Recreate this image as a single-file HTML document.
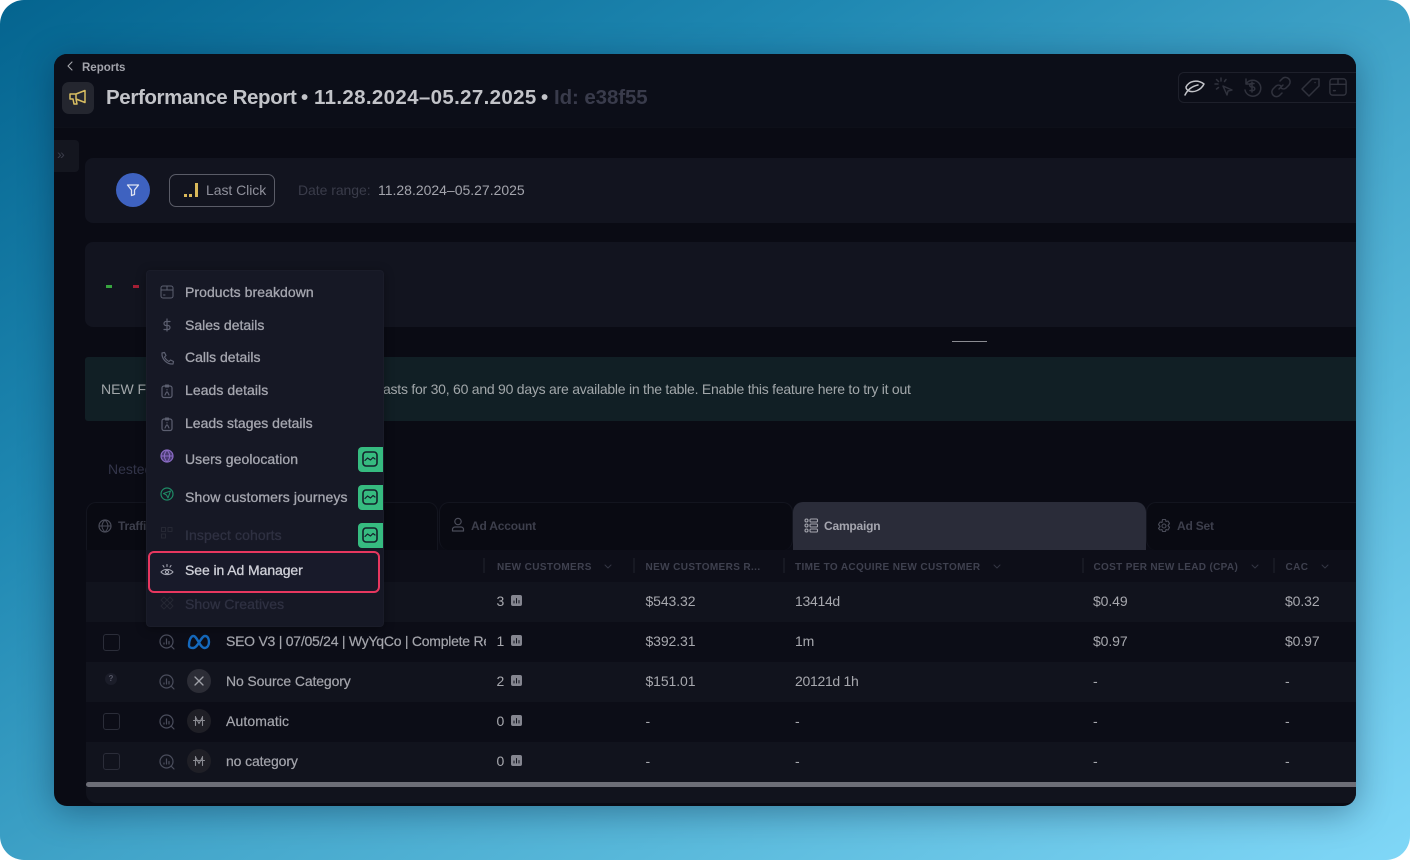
<!DOCTYPE html>
<html><head><meta charset="utf-8"><style>
*{box-sizing:border-box;margin:0;padding:0}
html,body{width:1410px;height:860px;overflow:hidden;background:#fff}
body{font-family:"Liberation Sans",sans-serif;position:relative}
#bg{position:absolute;inset:0;border-radius:24px;background:linear-gradient(148deg,#04648f 0%,#1f88b2 30%,#40a3c8 52%,#58b8da 72%,#80d7f7 100%);overflow:hidden}
#win{position:absolute;left:54px;top:54px;width:1302px;height:752px;border-radius:13px;background:#0a0b14;overflow:hidden;box-shadow:0 6px 34px rgba(0,20,50,.38)}
#in{position:absolute;inset:0;filter:blur(.3px)}
.a{position:absolute;white-space:nowrap}
svg{position:absolute;overflow:visible;fill:none;stroke-linecap:round;stroke-linejoin:round}
.card{position:absolute;background:#12141f;border-radius:8px}
.m{position:absolute;left:38px;font-size:14px;color:#a5a6af;white-space:nowrap;-webkit-text-stroke:.3px;letter-spacing:.06px}
.g{position:absolute;left:211px;width:25px;height:25px;background:#36bb80;border-radius:4px 0 0 4px}
.th{position:absolute;top:508px;font-size:10px;font-weight:bold;color:#3f414f;white-space:nowrap;letter-spacing:.38px}
.td{position:absolute;font-size:14px;color:#a7a8ae;white-space:nowrap;letter-spacing:-.1px}
.sep{position:absolute;top:504px;width:2px;height:15px;background:#171923}
.cb{position:absolute;left:49px;width:17px;height:17px;border:1px solid #2b2d39;border-radius:3px}
.tt{position:absolute;top:32px;font-size:20.5px;font-weight:bold;white-space:nowrap;color:#c2c3c8}
.tab{position:absolute;font-size:12px;font-weight:bold;color:#3d3f4c;white-space:nowrap;letter-spacing:-.2px;top:465px}
.lb{left:172px;color:#a4a5ac;-webkit-text-stroke:.2px}
</style></head><body>
<div id="bg">
<div id="win"><div id="in">
  <div class="a" style="left:0;top:0;width:1302px;height:74px;background:#0c0e18;border-bottom:1px solid #0e1019"></div>
  <svg style="left:12px;top:7px" width="8" height="10" viewBox="0 0 8 10"><path d="M6 1L2 5l4 4" stroke="#a7a8ae" stroke-width="1.100"/></svg>
  <div class="a" style="left:28px;top:8px;font-size:11.500px;font-weight:bold;color:#a2a3ab">Reports</div>
  <div class="a" style="left:8px;top:28px;width:32px;height:32px;background:#24262f;border-radius:7px"></div>
  <svg style="left:14px;top:33px" width="20" height="20" viewBox="0 0 20 20"><path d="M2 7v5h3l1 5h3l-1-5 9 3.500V3.500L8 7zM8 7v5" stroke="#d8bd62" stroke-width="1.500"/></svg>
  <div class="tt" style="left:52px;letter-spacing:-.37px">Performance Report</div>
  <div class="tt" style="left:247px">•</div>
  <div class="tt" style="left:260px;letter-spacing:.34px">11.28.2024–05.27.2025</div>
  <div class="tt" style="left:487px">•</div>
  <div class="tt" style="left:500px;color:#393b4b;letter-spacing:-.1px">Id: e38f55</div>

  <div class="a" style="left:1124px;top:18px;width:190px;height:31px;border:1px solid #1e202b;border-radius:6px"></div>
  <svg style="left:1129px;top:22px" width="22" height="22" viewBox="0 0 22 22"><path d="M2 19c3-6 8-9 13-10M3 11C6 5 14 3 21 8c-3 6-10 9-15 7-2-1-3-2-3-4z" stroke="#c3c4c9" stroke-width="1.500"/></svg>
  <svg style="left:1159px;top:22px" width="22" height="22" viewBox="0 0 22 22"><path d="M10 10l9 4-4 1-1 4zM8 2v3M2 8h3M3.500 3.500l2 2M13 3.500l-1.500 2M3.500 13l2-1.500" stroke="#30323d" stroke-width="1.500"/></svg>
  <svg style="left:1187px;top:22px" width="22" height="22" viewBox="0 0 22 22"><path d="M5 3v5h5M5 8a8 8 0 1 1-1 6M13 7.500h-2.500a1.600 1.600 0 0 0 0 3.500h1.500a1.600 1.600 0 0 1 0 3.500H9M11 6v10" stroke="#30323d" stroke-width="1.500"/></svg>
  <svg style="left:1216px;top:22px" width="22" height="22" viewBox="0 0 22 22"><path d="M9 13l4-4M10 5l2-2a4.500 4.500 0 0 1 7 6l-3 3a4 4 0 0 1-5 0M12 17l-2 2a4.500 4.500 0 0 1-7-6l3-3a4 4 0 0 1 5 0" stroke="#30323d" stroke-width="1.500"/></svg>
  <svg style="left:1245px;top:22px" width="22" height="22" viewBox="0 0 22 22"><path d="M3 13L13 3h7v7L10 20zM16 6.500h.1" stroke="#30323d" stroke-width="1.500"/></svg>
  <svg style="left:1275px;top:24px" width="18" height="18" viewBox="0 0 20 20"><rect x="1" y="1" width="18" height="18" rx="3" stroke="#30323d" stroke-width="1.600"/><path d="M1 7h18M10 1v6M5 14h2" stroke="#30323d" stroke-width="1.600"/></svg>

  <div class="a" style="left:0;top:86px;width:25px;height:32px;background:#14161f;border-radius:0 4px 4px 0"></div>
  <div class="a" style="left:3px;top:92px;font-size:14px;color:#3b3d4a">»</div>

  <div class="card" style="left:31px;top:104px;width:1280px;height:65px"></div>
  <div class="a" style="left:62px;top:119px;width:34px;height:34px;border-radius:50%;background:#3e62c0"></div>
  <svg style="left:72px;top:129px" width="14" height="14" viewBox="0 0 14 14"><path d="M1.500 2h11L8.500 7v4.500l-3 1V7z" stroke="#dfe4f2" stroke-width="1.300"/></svg>
  <div class="a" style="left:115px;top:120px;width:106px;height:33px;border:1px solid #5a5c67;border-radius:7px"></div>
  <div class="a" style="left:130px;top:140px;width:3px;height:3px;background:#d9b95a"></div>
  <div class="a" style="left:135px;top:140px;width:3px;height:3px;background:#d9b95a"></div>
  <div class="a" style="left:141px;top:129px;width:2.500px;height:14px;background:#d9b95a"></div>
  <div class="a" style="left:152px;top:128px;font-size:14px;color:#8f909b;letter-spacing:-.05px">Last Click</div>
  <div class="a" style="left:244px;top:128px;font-size:14px;color:#3a3c4a;letter-spacing:-.05px">Date range:</div>
  <div class="a" style="left:324px;top:128px;font-size:14px;color:#a3a4ac;letter-spacing:-.01px">11.28.2024–05.27.2025</div>

  <div class="card" style="left:31px;top:188px;width:1280px;height:85px"></div>
  <div class="a" style="left:52px;top:231px;width:6px;height:3px;background:#38a53f"></div>
  <div class="a" style="left:79px;top:231px;width:6px;height:3px;background:#a51f35"></div>
  <div class="a" style="left:898px;top:287px;width:35px;height:1px;background:#8b8c92"></div>

  <div class="a" style="left:31px;top:303px;width:1280px;height:64px;background:#111f25;border-radius:3px"></div>
  <div class="a" style="left:47px;top:327px;font-size:14px;color:#a2a7aa">NEW F</div>
  <div class="a" style="left:329px;top:327px;font-size:14px;color:#a2a7aa;letter-spacing:-.24px">asts for 30, 60 and 90 days are available in the table. Enable this feature here to try it out</div>

  <div class="a" style="left:54px;top:407px;font-size:14px;color:#33354a">Nested</div>

  <div class="a" style="left:32px;top:448px;width:352px;height:48px;background:#090a12;border:1px solid #13151f;border-bottom:0;border-radius:10px 10px 0 0"></div>
  <svg style="left:44px;top:465px" width="14" height="14" viewBox="0 0 14 14"><circle cx="7" cy="7" r="6" stroke="#4a4c59" stroke-width="1.200"/><path d="M1 7h12M7 1c-4 4-4 8 0 12M7 1c4 4 4 8 0 12" stroke="#4a4c59" stroke-width="1"/></svg>
  <div class="tab" style="left:64px">Traffic</div>
  <div class="a" style="left:385px;top:448px;width:354px;height:48px;background:#090a12;border:1px solid #13151f;border-bottom:0;border-radius:10px"></div>
  <svg style="left:397px;top:463px" width="14" height="15" viewBox="0 0 14 15"><circle cx="7" cy="4.500" r="3.200" stroke="#4a4c59" stroke-width="1.200"/><path d="M1.500 14v-1.500A2.500 2.500 0 0 1 4 10h6a2.500 2.500 0 0 1 2.500 2.500V14z" stroke="#4a4c59" stroke-width="1.200"/></svg>
  <div class="tab" style="left:417px">Ad Account</div>
  <div class="a" style="left:739px;top:448px;width:353px;height:48px;background:#2a2c39;border-radius:10px 10px 0 0"></div>
  <svg style="left:750px;top:464px" width="14" height="15" viewBox="0 0 14 15"><g stroke="#a5a6af" stroke-width="1.100"><circle cx="2.500" cy="2.500" r="1.500"/><circle cx="2.500" cy="7.500" r="1.500"/><circle cx="2.500" cy="12.500" r="1.500"/><rect x="6" y="1" width="7.500" height="3" rx="1"/><rect x="6" y="6" width="7.500" height="3" rx="1"/><rect x="6" y="11" width="7.500" height="3" rx="1"/></g></svg>
  <div class="tab" style="left:770px;color:#a5a6af">Campaign</div>
  <div class="a" style="left:1092px;top:448px;width:230px;height:48px;background:#090a12;border:1px solid #13151f;border-bottom:0;border-radius:10px"></div>
  <svg style="left:1103px;top:465px" width="14" height="14" viewBox="0 0 14 14"><path d="M5.500 1h3l.5 2 2-.5 1.500 2.500-1.500 2 1.500 2-1.500 2.500-2-.5-.5 2h-3l-.5-2-2 .5L1.500 10 3 8 1.500 6 3 3.500l2 .5z" stroke="#4a4c59" stroke-width="1.100" transform="translate(0 -.5)"/><circle cx="7" cy="7" r="2" stroke="#4a4c59" stroke-width="1.100"/></svg>
  <div class="tab" style="left:1123px">Ad Set</div>

  <div class="a" style="left:32px;top:496px;width:1270px;height:32px;background:#0d0e18"></div>
  <div class="a" style="left:32px;top:528px;width:1270px;height:40px;background:#11131d"></div>
  <div class="a" style="left:32px;top:568px;width:1270px;height:40px;background:#0c0d17"></div>
  <div class="a" style="left:32px;top:608px;width:1270px;height:40px;background:#11131d"></div>
  <div class="a" style="left:32px;top:648px;width:1270px;height:40px;background:#0c0d17"></div>
  <div class="a" style="left:32px;top:688px;width:1270px;height:40px;background:#11131d"></div>
  <div class="a" style="left:32px;top:728px;width:1270px;height:21px;background:#11131d;border-radius:0 0 0 10px"></div>
  <div class="a" style="left:32px;top:728px;width:1270px;height:5px;background:#6d6e77;border-radius:3px 0 0 3px"></div>

  <div class="sep" style="left:429px"></div><div class="sep" style="left:579px"></div><div class="sep" style="left:729px"></div><div class="sep" style="left:1028px"></div><div class="sep" style="left:1219px"></div>
  <div class="th" style="left:443px">NEW CUSTOMERS</div>
  <div class="th" style="left:591.500px">NEW CUSTOMERS R...</div>
  <div class="th" style="left:741px">TIME TO ACQUIRE NEW CUSTOMER</div>
  <div class="th" style="left:1039.500px;letter-spacing:.33px">COST PER NEW LEAD (CPA)</div>
  <div class="th" style="left:1231.500px">CAC</div>
  <svg style="left:550px;top:510px" width="8" height="6" viewBox="0 0 8 6"><path d="M1 1l3 3 3-3" stroke="#343643"/></svg>
  <svg style="left:939px;top:510px" width="8" height="6" viewBox="0 0 8 6"><path d="M1 1l3 3 3-3" stroke="#343643"/></svg>
  <svg style="left:1197px;top:510px" width="8" height="6" viewBox="0 0 8 6"><path d="M1 1l3 3 3-3" stroke="#343643"/></svg>
  <svg style="left:1267px;top:510px" width="8" height="6" viewBox="0 0 8 6"><path d="M1 1l3 3 3-3" stroke="#343643"/></svg>

  <div class="td" style="left:442.500px;top:539px">3</div><div class="td" style="left:591.500px;top:539px">$543.32</div><div class="td" style="left:741px;top:539px;letter-spacing:-.3px">13414d</div><div class="td" style="left:1039px;top:539px">$0.49</div><div class="td" style="left:1231px;top:539px">$0.32</div>
  <div class="td" style="left:442.500px;top:579px">1</div><div class="td" style="left:591.500px;top:579px">$392.31</div><div class="td" style="left:741px;top:579px">1m</div><div class="td" style="left:1039px;top:579px">$0.97</div><div class="td" style="left:1231px;top:579px">$0.97</div>
  <div class="td" style="left:442.500px;top:619px">2</div><div class="td" style="left:591.500px;top:619px">$151.01</div><div class="td" style="left:741px;top:619px;letter-spacing:-.3px">20121d 1h</div><div class="td" style="left:1039px;top:619px">-</div><div class="td" style="left:1231px;top:619px">-</div>
  <div class="td" style="left:442.500px;top:659px">0</div><div class="td" style="left:591.500px;top:659px">-</div><div class="td" style="left:741px;top:659px">-</div><div class="td" style="left:1039px;top:659px">-</div><div class="td" style="left:1231px;top:659px">-</div>
  <div class="td" style="left:442.500px;top:699px">0</div><div class="td" style="left:591.500px;top:699px">-</div><div class="td" style="left:741px;top:699px">-</div><div class="td" style="left:1039px;top:699px">-</div><div class="td" style="left:1231px;top:699px">-</div>

  <svg style="left:457px;top:541px" width="11" height="11" viewBox="0 0 11 11"><rect width="11" height="11" rx="2" fill="#858690"/><path d="M3 6v2M5.500 3.500V8M8 5.500V8" stroke="#11131d"/></svg>
  <svg style="left:457px;top:581px" width="11" height="11" viewBox="0 0 11 11"><rect width="11" height="11" rx="2" fill="#858690"/><path d="M3 6v2M5.500 3.500V8M8 5.500V8" stroke="#11131d"/></svg>
  <svg style="left:457px;top:621px" width="11" height="11" viewBox="0 0 11 11"><rect width="11" height="11" rx="2" fill="#858690"/><path d="M3 6v2M5.500 3.500V8M8 5.500V8" stroke="#11131d"/></svg>
  <svg style="left:457px;top:661px" width="11" height="11" viewBox="0 0 11 11"><rect width="11" height="11" rx="2" fill="#858690"/><path d="M3 6v2M5.500 3.500V8M8 5.500V8" stroke="#11131d"/></svg>
  <svg style="left:457px;top:701px" width="11" height="11" viewBox="0 0 11 11"><rect width="11" height="11" rx="2" fill="#858690"/><path d="M3 6v2M5.500 3.500V8M8 5.500V8" stroke="#11131d"/></svg>

  <div class="cb" style="top:580px"></div>
  <div class="cb" style="top:659px"></div>
  <div class="cb" style="top:699px"></div>
  <div class="a" style="left:51px;top:619px;width:12px;height:12px;border-radius:50%;background:#1b1d29;color:#555766;font-size:8px;font-weight:bold;text-align:center;line-height:12px">?</div>

  <svg style="left:105px;top:580px" width="16" height="16" viewBox="0 0 16 16"><circle cx="7.500" cy="7.500" r="6.500" stroke="#4a4d5c" stroke-width="1.200"/><path d="M12 12l3 3M5 9v1M7.500 5v5M10 7.500V10" stroke="#4a4d5c" stroke-width="1.200"/></svg>
  <svg style="left:105px;top:620px" width="16" height="16" viewBox="0 0 16 16"><circle cx="7.500" cy="7.500" r="6.500" stroke="#4a4d5c" stroke-width="1.200"/><path d="M12 12l3 3M5 9v1M7.500 5v5M10 7.500V10" stroke="#4a4d5c" stroke-width="1.200"/></svg>
  <svg style="left:105px;top:660px" width="16" height="16" viewBox="0 0 16 16"><circle cx="7.500" cy="7.500" r="6.500" stroke="#4a4d5c" stroke-width="1.200"/><path d="M12 12l3 3M5 9v1M7.500 5v5M10 7.500V10" stroke="#4a4d5c" stroke-width="1.200"/></svg>
  <svg style="left:105px;top:700px" width="16" height="16" viewBox="0 0 16 16"><circle cx="7.500" cy="7.500" r="6.500" stroke="#4a4d5c" stroke-width="1.200"/><path d="M12 12l3 3M5 9v1M7.500 5v5M10 7.500V10" stroke="#4a4d5c" stroke-width="1.200"/></svg>

  <svg style="left:133px;top:580px" width="24" height="16" viewBox="0 0 24 16"><path d="M2 11.500C2 6 4 2 6.500 2 10 2 13 14 17.500 14 20.500 14 22 11 22 8 22 4.500 20.500 2 18 2 14 2 11 14 6 14 3.500 14 2 13 2 11.500z" stroke="#1569bd" stroke-width="2.400"/></svg>
  <div class="a" style="left:133px;top:615px;width:24px;height:24px;border-radius:50%;background:#2c2d36"></div>
  <svg style="left:139px;top:621px" width="12" height="12" viewBox="0 0 12 12"><path d="M2 2l8 8M10 2l-8 8" stroke="#a0a1a8" stroke-width="1.300"/></svg>
  <div class="a" style="left:133px;top:655px;width:24px;height:24px;border-radius:50%;background:#1f1f26"></div>
  <svg style="left:139px;top:661px" width="12" height="12" viewBox="0 0 12 12"><path d="M2.500 1.500v9M9.500 1.500v9M.5 5.500h11M2.500 2l3.500 6.500L9.500 2" stroke="#8a8b92" stroke-width="1.100"/></svg>
  <div class="a" style="left:133px;top:695px;width:24px;height:24px;border-radius:50%;background:#1f1f26"></div>
  <svg style="left:139px;top:701px" width="12" height="12" viewBox="0 0 12 12"><path d="M2.500 1.500v9M9.500 1.500v9M.5 5.500h11M2.500 2l3.500 6.500L9.500 2" stroke="#8a8b92" stroke-width="1.100"/></svg>

  <div class="td lb" style="top:579px;width:260px;overflow:hidden;letter-spacing:-.25px">SEO V3 | 07/05/24 | WyYqCo | Complete Remarketing</div>
  <div class="td lb" style="top:619px;letter-spacing:-.12px">No Source Category</div>
  <div class="td lb" style="top:659px;letter-spacing:.1px">Automatic</div>
  <div class="td lb" style="top:699px;letter-spacing:-.13px">no category</div>

  <div class="a" style="left:92px;top:216px;width:238px;height:357px;background:#161825;border-radius:4px;border:1px solid #1a1c29;box-shadow:0 2px 10px rgba(0,0,0,.35)">
    <svg style="left:13px;top:14px" width="14" height="14" viewBox="0 0 14 14"><rect x="1" y="1" width="12" height="12" rx="2" stroke="#5c5f70"/><path d="M1 5h12M7 1v4M3.500 10h1.500" stroke="#5c5f70"/></svg>
    <div class="m" style="top:12.500px">Products breakdown</div>
    <svg style="left:13px;top:47px" width="14" height="14" viewBox="0 0 14 14"><path d="M10 3.500H6a2 2 0 0 0 0 4h2a2 2 0 0 1 0 4H4M7 1v12" stroke="#5c5f70" stroke-width="1.200"/></svg>
    <div class="m" style="top:46px;letter-spacing:0">Sales details</div>
    <svg style="left:13px;top:80px" width="14" height="14" viewBox="0 0 14 14"><path d="M2 2l2.500-.5L6 4.500 4.500 6C5.500 8 7 9.500 9 10.500L10.500 9l3 1.500-.5 2.500C7 13.500 1.500 8 2 2z" stroke="#5c5f70" stroke-width="1.200"/></svg>
    <div class="m" style="top:78px;letter-spacing:0">Calls details</div>
    <svg style="left:14px;top:113px" width="12" height="14" viewBox="0 0 12 14"><rect x="1" y="2" width="10" height="11.500" rx="2" stroke="#5c5f70" stroke-width="1.200"/><path d="M4.500 1h3v2h-3zM6 5.500v.5M4 11l1.500-3h1L8 11" stroke="#5c5f70" stroke-width="1.100"/></svg>
    <div class="m" style="top:111px">Leads details</div>
    <svg style="left:14px;top:146px" width="12" height="14" viewBox="0 0 12 14"><rect x="1" y="2" width="10" height="11.500" rx="2" stroke="#5c5f70" stroke-width="1.200"/><path d="M4.500 1h3v2h-3zM6 5.500v.5M4 11l1.500-3h1L8 11" stroke="#5c5f70" stroke-width="1.100"/></svg>
    <div class="m" style="top:144px;letter-spacing:0">Leads stages details</div>
    <svg style="left:13px;top:178px" width="14" height="14" viewBox="0 0 14 14"><circle cx="7" cy="7" r="6" fill="#4a3b73" stroke="#8a6bc4" stroke-width="1.200"/><path d="M1 7h12M7 1c-3.500 4-3.500 8 0 12M7 1c3.500 4 3.500 8 0 12" stroke="#8a6bc4"/></svg>
    <div class="m" style="top:180px">Users geolocation</div>
    <svg style="left:13px;top:216px" width="14" height="14" viewBox="0 0 14 14"><circle cx="7" cy="7" r="6" stroke="#1f8b66" stroke-width="1.200"/><path d="M3.500 6.500l7-2.500-2.500 7-1.500-3z" stroke="#1f8b66" stroke-width="1.100"/></svg>
    <div class="m" style="top:218px;letter-spacing:.1px">Show customers journeys</div>
    <svg style="left:14px;top:256px" width="12" height="12" viewBox="0 0 12 12"><g stroke="#262834" stroke-width="1"><rect x=".5" y=".5" width="4" height="4"/><rect x="7" y=".5" width="4" height="4"/><rect x=".5" y="7" width="4" height="4"/></g></svg>
    <div class="m" style="top:256px;color:#2f3142;letter-spacing:.12px">Inspect cohorts</div>
    <div class="g" style="top:176px"></div><div class="g" style="top:214px"></div><div class="g" style="top:252px"></div>
    <svg style="left:215px;top:180px" width="16" height="16" viewBox="0 0 16 16"><rect x="1" y="1" width="14" height="14" rx="3" stroke="#14212a" stroke-width="1.600"/><path d="M3 9.500l2.500-2.500 3 2 2.500-2.500 2 1.500" stroke="#14212a" stroke-width="1.200"/></svg>
    <svg style="left:215px;top:218px" width="16" height="16" viewBox="0 0 16 16"><rect x="1" y="1" width="14" height="14" rx="3" stroke="#14212a" stroke-width="1.600"/><path d="M3 9.500l2.500-2.500 3 2 2.500-2.500 2 1.500" stroke="#14212a" stroke-width="1.200"/></svg>
    <svg style="left:215px;top:256px" width="16" height="16" viewBox="0 0 16 16"><rect x="1" y="1" width="14" height="14" rx="3" stroke="#14212a" stroke-width="1.600"/><path d="M3 9.500l2.500-2.500 3 2 2.500-2.500 2 1.500" stroke="#14212a" stroke-width="1.200"/></svg>
    <div class="a" style="left:.5px;top:280px;width:232px;height:42px;background:#181a2a;border:2px solid #e7375f;border-radius:6px"></div>
    <svg style="left:13px;top:292px" width="14" height="14" viewBox="0 0 14 14"><path d="M1 9c3-3.500 9-3.500 12 0-3 3.500-9 3.500-12 0z" stroke="#a6a7b3" stroke-width="1.100"/><circle cx="7" cy="9" r="1.600" stroke="#a6a7b3" stroke-width="1.100"/><path d="M7 1.500v2M3 2.500l1 1.500M11 2.500L10 4" stroke="#a6a7b3" stroke-width="1.100"/></svg>
    <div class="m" style="top:291px;color:#cfd0d8;letter-spacing:-.08px">See in Ad Manager</div>
    <svg style="left:13px;top:325px" width="14" height="14" viewBox="0 0 14 14"><path d="M1 4l3-3 9 9-3 3zM10 1l3 3-9 9-3-3z" stroke="#262834"/></svg>
    <div class="m" style="top:325px;color:#2f3142;letter-spacing:.08px">Show Creatives</div>
  </div>
</div></div>
</div>
</body></html>
